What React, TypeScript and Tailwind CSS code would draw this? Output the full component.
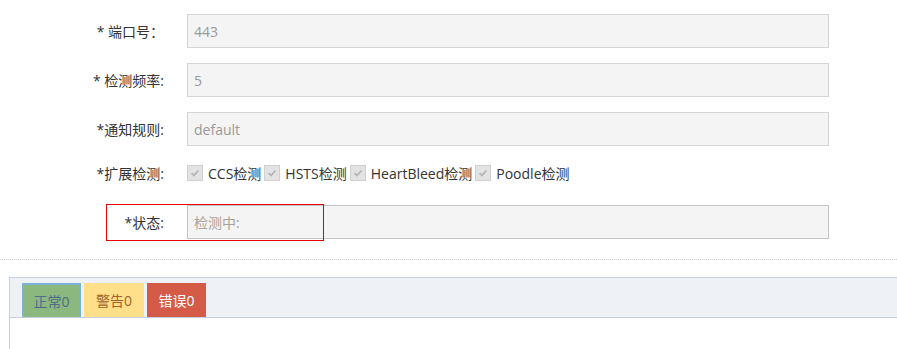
import React from "react";

const FONT = { fontFamily: '"Open Sans", "Noto Sans CJK SC", sans-serif' };

const FormRow = ({ label, children, h = "h-[34px]" }: { label: string; children: React.ReactNode; h?: string }) => (
  <div className={`flex items-center ${h}`}>
    <label className="w-[164px] text-right text-[14px] text-[#333] shrink-0">{label}</label>
    <div className="ml-[23px] flex items-center">{children}</div>
  </div>
);

const ReadOnlyInput = ({ value, border = "border-[#d5d5d5]", color = "text-[#999]" }: { value: string; border?: string; color?: string }) => (
  <div className={`w-[642px] h-[34px] border ${border} bg-[#f4f4f4] flex items-center pl-[6px] text-[14px] ${color}`}>
    {value}
  </div>
);

const CheckItem = ({ label }: { label: string }) => (
  <span className="flex items-center mr-[3px]">
    <span className="w-[16px] h-[16px] bg-[#e3e3e3] border border-[#cfcfcf] flex items-center justify-center">
      <svg width="10" height="10" viewBox="0 0 10 10">
        <path d="M1.5 5.2 L4 7.5 L8.5 2.5" stroke="#b5b5b5" strokeWidth="1.8" fill="none" />
      </svg>
    </span>
    <span className="ml-[5px] text-[14px] text-[#333]">{label}</span>
  </span>
);

const App = () => {
  return (
    <div className="w-[897px] h-[349px] bg-white overflow-hidden" style={FONT}>
      <div className="pt-[14px] flex flex-col gap-[15px]">
        <FormRow label="* 端口号：">
          <ReadOnlyInput value="443" />
        </FormRow>
        <FormRow label="* 检测频率:">
          <ReadOnlyInput value="5" />
        </FormRow>
        <FormRow label="*通知规则:">
          <ReadOnlyInput value="default" />
        </FormRow>
        <FormRow label="*扩展检测:" h="h-[24px]">
          <CheckItem label="CCS检测" />
          <CheckItem label="HSTS检测" />
          <CheckItem label="HeartBleed检测" />
          <CheckItem label="Poodle检测" />
        </FormRow>
        <div className="relative mt-[5px]">
          <FormRow label="*状态:">
            <ReadOnlyInput value="检测中:" border="border-[#c4c4c4]" color="text-[#a8a29c]" />
          </FormRow>
          {/* highlight box */}
          <div className="absolute left-[106px] top-[-1px] w-[218px] h-[37px] border border-[#e60000] pointer-events-none" />
        </div>
      </div>

      <div className="mt-[20px] border-t border-dotted border-[#d0d0d0]" />

      <div className="mt-[17px] ml-[9px] border-l border-t border-[#c5d0dc] h-[80px]">
        <div className="h-[40px] bg-[#eef1f6] border-b border-[#c5d0dc] flex items-end pl-[12px] gap-[3px]">
          <div className="w-[59px] h-[34px] bg-[#8ab87f] border-t-2 border-l border-r border-[#7fb0d8] flex items-center justify-center text-[14px] text-[#4f6c8c]">
            正常0
          </div>
          <div className="w-[60px] h-[34px] bg-[#ffdf8a] flex items-center justify-center text-[14px] text-[#a0652e]">
            警告0
          </div>
          <div className="w-[59px] h-[34px] bg-[#d35b47] flex items-center justify-center text-[14px] text-white">
            错误0
          </div>
        </div>
      </div>
    </div>
  );
};

export default App;
